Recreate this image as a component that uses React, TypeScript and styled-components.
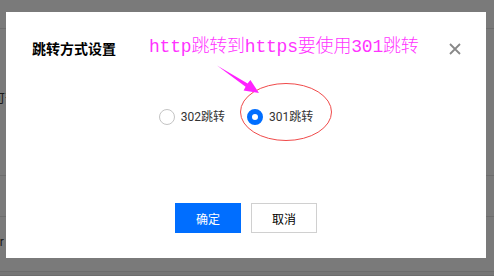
import React from "react";
import styled, { createGlobalStyle } from "styled-components";

const Global = createGlobalStyle`
  html, body { margin: 0; padding: 0; background: #fff; }
  body { font-family: Roboto, "Noto Sans CJK SC", sans-serif; overflow: hidden; }
`;

const Page = styled.div`
  width: 494px;
  height: 276px;
  background: #fff;
  display: flex;
  flex-direction: column;
`;

const TopBar = styled.div`
  height: 28px;
  border-bottom: 1px solid #e4e4e4;
`;

const PageRow = styled.div<{ $h: number; $pt: number; $bg?: string }>`
  height: ${(p) => p.$h}px;
  padding-top: ${(p) => p.$pt}px;
  box-sizing: border-box;
  border-bottom: 1px solid #e4e4e4;
  background: ${(p) => p.$bg || "#fff"};
  font-size: 12px;
  line-height: 14px;
  color: #333;
`;

const Clipped = styled.span`
  display: inline-block;
  margin-left: -7px;
`;

const Overlay = styled.div`
  position: fixed;
  inset: 0;
  background: rgba(0, 0, 0, 0.52);
  padding: 12px 0 0 6px;
  box-sizing: border-box;
`;

const Dialog = styled.div`
  position: relative;
  width: 480px;
  height: 246px;
  background: #fff;
  display: flex;
  flex-direction: column;
  box-sizing: border-box;
`;

const Header = styled.div`
  display: flex;
  align-items: center;
  justify-content: space-between;
  padding: 28px 25px 0 26px;
  height: 18px;
  box-sizing: content-box;
`;

const Title = styled.h3`
  margin: 0;
  font-size: 14px;
  line-height: 18px;
  font-weight: 700;
  color: #000;
`;

const Close = styled.button`
  border: 0;
  background: none;
  padding: 0;
  width: 12px;
  height: 12px;
  display: flex;
  cursor: pointer;
`;

const Body = styled.div`
  margin-top: 51px;
  display: flex;
  justify-content: center;
  padding-left: 2px;
`;

const RadioItem = styled.label`
  display: flex;
  align-items: center;
  gap: 6px;
  margin-right: 22px;
  font-size: 12px;
  line-height: 16px;
  color: #333;
`;

const RadioDot = styled.span<{ $checked?: boolean }>`
  width: 16px;
  height: 16px;
  box-sizing: border-box;
  border-radius: 50%;
  background: #fff;
  border: ${(p) => (p.$checked ? "5px solid #006eff" : "1px solid #c4c4c4")};
`;

const Footer = styled.div`
  margin-top: 78px;
  display: flex;
  justify-content: center;
  gap: 10px;
`;

const Button = styled.button<{ $primary?: boolean }>`
  width: 66px;
  height: 30px;
  box-sizing: border-box;
  font-family: Roboto, "Noto Sans CJK SC", sans-serif;
  font-size: 12px;
  padding: 0;
  cursor: pointer;
  border: 1px solid ${(p) => (p.$primary ? "#006eff" : "#d0d0d0")};
  background: ${(p) => (p.$primary ? "#006eff" : "#fff")};
  color: ${(p) => (p.$primary ? "#fff" : "#000")};
`;

const Note = styled.div`
  position: absolute;
  left: 143px;
  top: 24px;
  font-family: "Liberation Mono", "Noto Sans CJK SC", monospace;
  font-size: 18px;
  font-weight: 300;
  line-height: 22px;
  letter-spacing: -0.2px;
  color: #ff33ff;
  white-space: nowrap;
`;

const Marks = styled.svg`
  position: absolute;
  left: 0;
  top: 0;
  pointer-events: none;
`;

export default function App() {
  return (
    <>
      <Global />
      <Page>
        <TopBar />
        <PageRow $h={148} $pt={63}>
          <Clipped>可否</Clipped>
        </PageRow>
        <PageRow $h={41} $pt={0} />
        <PageRow $h={55} $pt={18}>
          <Clipped>or</Clipped>
        </PageRow>
        <PageRow $h={4} $pt={0} $bg="#f7f7f7" />
      </Page>
      <Overlay>
        <Dialog>
          <Header>
            <Title>跳转方式设置</Title>
            <Close aria-label="close">
              <svg width="12" height="12" viewBox="0 0 12 12">
                <path d="M1 1L11 11M11 1L1 11" stroke="#888" strokeWidth="1.8" />
              </svg>
            </Close>
          </Header>
          <Body>
            <RadioItem>
              <RadioDot />
              302跳转
            </RadioItem>
            <RadioItem>
              <RadioDot $checked />
              301跳转
            </RadioItem>
          </Body>
          <Footer>
            <Button $primary>确定</Button>
            <Button>取消</Button>
          </Footer>
          <Note>http跳转到https要使用301跳转</Note>
          <Marks width="480" height="246" viewBox="6 12 480 246">
            <ellipse cx="286" cy="112" rx="45.5" ry="28.5" fill="none" stroke="#f04a4a" strokeWidth="1" />
            <polygon
              points="217,65.5 247.6,83.4 250.4,80 259,93 243.6,90.6 245.6,86.8"
              fill="#ff22ff"
            />
          </Marks>
        </Dialog>
      </Overlay>
    </>
  );
}
